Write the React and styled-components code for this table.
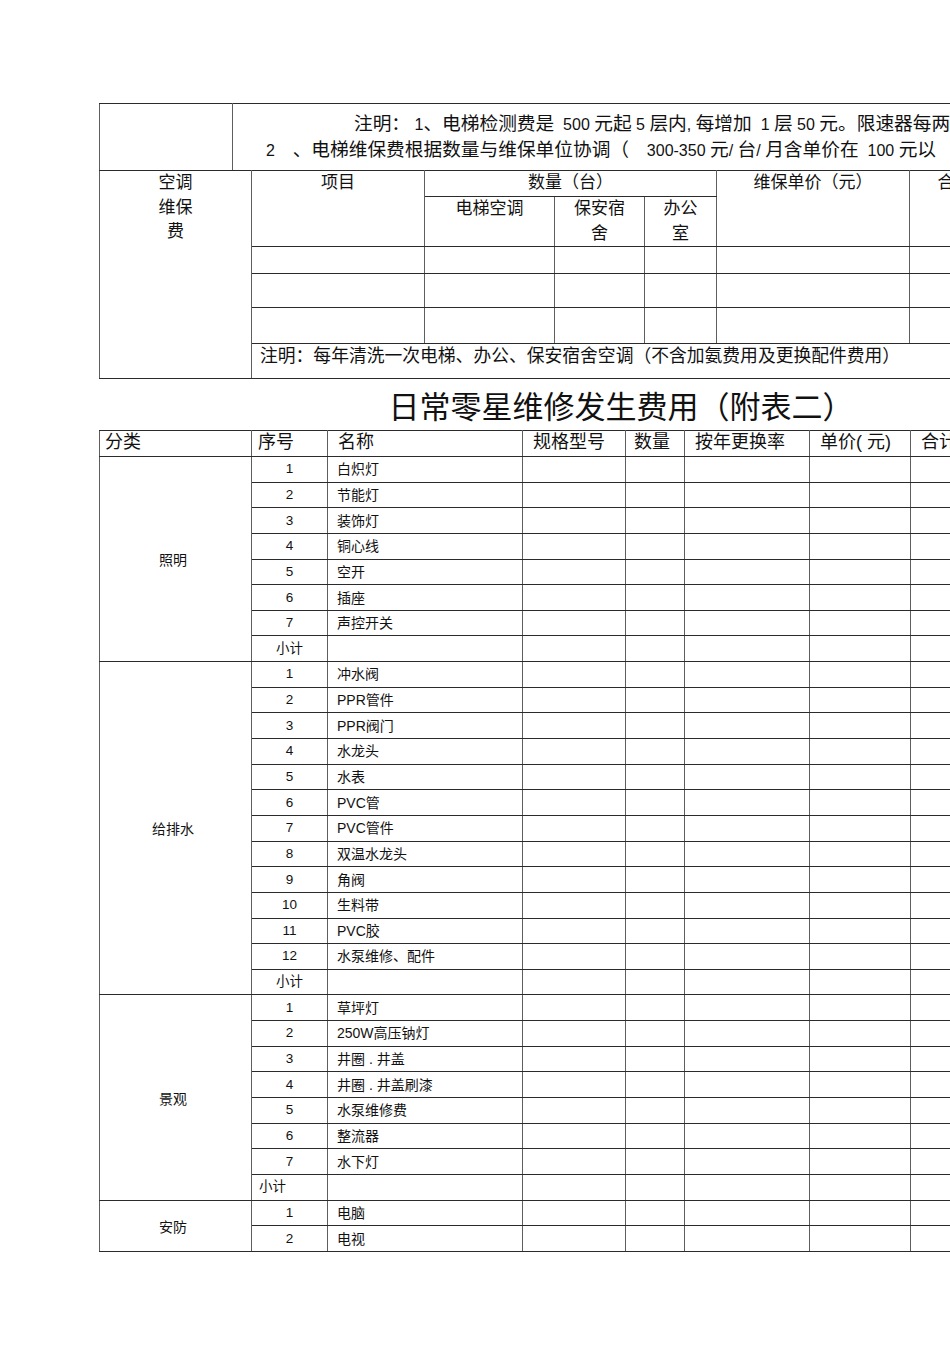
import styled, { createGlobalStyle } from 'styled-components';

const GlobalStyle = createGlobalStyle`
  html, body {
    margin: 0;
    padding: 0;
    background: #ffffff;
    overflow: hidden;
  }
  body {
    font-family: 'Liberation Sans', 'Noto Sans CJK SC', sans-serif;
    color: #111111;
  }
`;

const Page = styled.div`
  width: 1100px;
  padding: 103px 0 0 99px;
`;

const Grid = styled.table`
  border-collapse: collapse;
  table-layout: fixed;
  width: ${(props) => props.$width}px;
  margin-top: ${(props) => props.$offset || 0}px;

  td {
    border-top: 1px solid #2b2b2b;
    border-bottom: 1px solid #2b2b2b;
    border-left: 1px solid #5e5e5e;
    border-right: 1px solid #5e5e5e;
    padding: 0;
    overflow: visible;
  }
`;

const Row = styled.tr`
  height: ${(props) => props.$h}px;
`;

const NoteCell = styled.td`
  vertical-align: top;
  padding-top: 7px !important;
  font-size: 18.7px;
  line-height: 26px;
  white-space: nowrap;
`;

const NoteLine = styled.div`
  white-space: pre;
  height: 26px;
  padding-left: ${(props) => props.$indent}px;
`;

const Latin = styled.span`
  font-size: 16px;
`;

const HeadCell = styled.td`
  vertical-align: top;
  text-align: center;
  font-size: 17px;
  line-height: 24.5px;
  white-space: nowrap;
`;

const RemarkCell = styled.td`
  vertical-align: top;
  text-align: left;
  padding-left: 8px !important;
  font-size: 17.8px;
  line-height: 24px;
  white-space: nowrap;
`;

const Title = styled.div`
  width: 1044px;
  height: 51px;
  line-height: 51px;
  text-align: center;
  font-family: 'Noto Sans CJK SC', sans-serif;
  font-size: 31px;
  color: #111111;
`;

const ColHead = styled.td`
  text-align: left;
  vertical-align: middle;
  padding-left: ${(props) => props.$pad ?? 10}px !important;
  padding-bottom: 3px !important;
  font-size: 18px;
  line-height: 20px;
  white-space: nowrap;
`;

const DataRow = styled.tr`
  height: 25.65px;
`;

const GroupCell = styled.td`
  text-align: center;
  vertical-align: middle;
  font-size: 14px;
  padding-right: 5px !important;
`;

const NumCell = styled.td`
  text-align: ${(props) => props.$align || 'center'};
  padding-left: ${(props) => (props.$align === 'left' ? 7 : 0)}px !important;
  vertical-align: middle;
  font-size: 13.5px;
  line-height: 18px;
`;

const NameCell = styled.td`
  text-align: left;
  vertical-align: middle;
  padding-left: 9px !important;
  font-size: 14px;
  line-height: 18px;
  white-space: nowrap;
`;

const groups = [
  {
    name: '照明',
    items: ['白炽灯', '节能灯', '装饰灯', '铜心线', '空开', '插座', '声控开关'],
    subtotal: 'center',
  },
  {
    name: '给排水',
    items: [
      '冲水阀',
      'PPR管件',
      'PPR阀门',
      '水龙头',
      '水表',
      'PVC管',
      'PVC管件',
      '双温水龙头',
      '角阀',
      '生料带',
      'PVC胶',
      '水泵维修、配件',
    ],
    subtotal: 'center',
  },
  {
    name: '景观',
    items: ['草坪灯', '250W高压钠灯', '井圈 . 井盖', '井圈 . 井盖刷漆', '水泵维修费', '整流器', '水下灯'],
    subtotal: 'left',
  },
  {
    name: '安防',
    items: ['电脑', '电视'],
  },
];

// latin runs are set smaller than the CJK ones, as in the scanned sheet
const MixedText = ({ text }) =>
  text
    .split(/([\x20-\x7E]+)/)
    .filter(Boolean)
    .map((part, i) => (/^[\x20-\x7E]+$/.test(part) ? <Latin key={i}>{part}</Latin> : part));

const EmptyCells = ({ count }) =>
  Array.from({ length: count }).map((_, i) => <td key={i} />);

const NoteTable = () => (
  <Grid $width={900}>
    <colgroup>
      <col style={{ width: 133 }} />
      <col style={{ width: 767 }} />
    </colgroup>
    <tbody>
      <Row $h={67}>
        <td />
        <NoteCell>
          <NoteLine $indent={121}>
            <MixedText text="注明： 1、电梯检测费是  500 元起 5 层内, 每增加  1 层 50 元。限速器每两" />
          </NoteLine>
          <NoteLine $indent={33}>
            <MixedText text="2    、电梯维保费根据数量与维保单位协调（    300-350 元/ 台/ 月含单价在  100 元以" />
          </NoteLine>
        </NoteCell>
      </Row>
    </tbody>
  </Grid>
);

const AirTable = () => (
  <Grid $width={900} $offset={-1}>
    <colgroup>
      <col style={{ width: 152 }} />
      <col style={{ width: 173 }} />
      <col style={{ width: 130 }} />
      <col style={{ width: 90 }} />
      <col style={{ width: 72 }} />
      <col style={{ width: 193 }} />
      <col style={{ width: 90 }} />
    </colgroup>
    <tbody>
      <Row $h={26}>
        <HeadCell rowSpan={6}>
          空调
          <br />
          维保
          <br />
          费
        </HeadCell>
        <HeadCell rowSpan={2}>项目</HeadCell>
        <HeadCell colSpan={3}>数量（台）</HeadCell>
        <HeadCell rowSpan={2}>维保单价（元）</HeadCell>
        <HeadCell rowSpan={2}>合计</HeadCell>
      </Row>
      <Row $h={50}>
        <HeadCell>电梯空调</HeadCell>
        <HeadCell>
          保安宿
          <br />
          舍
        </HeadCell>
        <HeadCell>
          办公
          <br />
          室
        </HeadCell>
      </Row>
      <Row $h={27}>
        <EmptyCells count={6} />
      </Row>
      <Row $h={34}>
        <EmptyCells count={6} />
      </Row>
      <Row $h={36}>
        <EmptyCells count={6} />
      </Row>
      <Row $h={35}>
        <RemarkCell colSpan={6}>
          注明：每年清洗一次电梯、办公、保安宿舍空调（不含加氨费用及更换配件费用）
        </RemarkCell>
      </Row>
    </tbody>
  </Grid>
);

const RepairTable = () => (
  <Grid $width={901}>
    <colgroup>
      <col style={{ width: 152 }} />
      <col style={{ width: 76 }} />
      <col style={{ width: 195 }} />
      <col style={{ width: 103 }} />
      <col style={{ width: 59 }} />
      <col style={{ width: 125 }} />
      <col style={{ width: 101 }} />
      <col style={{ width: 90 }} />
    </colgroup>
    <tbody>
      <Row $h={26}>
        <ColHead $pad={5}>分类</ColHead>
        <ColHead $pad={6}>序号</ColHead>
        <ColHead>名称</ColHead>
        <ColHead>规格型号</ColHead>
        <ColHead $pad={8}>数量</ColHead>
        <ColHead>按年更换率</ColHead>
        <ColHead>单价( 元)</ColHead>
        <ColHead>合计</ColHead>
      </Row>
      {groups.map((group) => {
        const span = group.items.length + (group.subtotal ? 1 : 0);
        return [
          ...group.items.map((item, i) => (
            <DataRow key={`${group.name}-${i}`}>
              {i === 0 && <GroupCell rowSpan={span}>{group.name}</GroupCell>}
              <NumCell>{i + 1}</NumCell>
              <NameCell>{item}</NameCell>
              <EmptyCells count={5} />
            </DataRow>
          )),
          group.subtotal && (
            <DataRow key={`${group.name}-sub`}>
              <NumCell $align={group.subtotal}>小计</NumCell>
              <NameCell />
              <EmptyCells count={5} />
            </DataRow>
          ),
        ];
      })}
    </tbody>
  </Grid>
);

const App = () => (
  <>
    <GlobalStyle />
    <Page>
      <NoteTable />
      <AirTable />
      <Title>日常零星维修发生费用（附表二）</Title>
      <RepairTable />
    </Page>
  </>
);

export default App;
